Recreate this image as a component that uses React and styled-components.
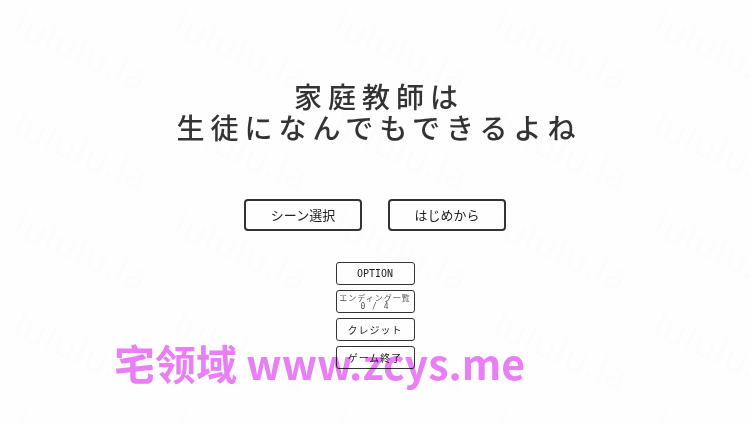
import React from "react";
import styled, { createGlobalStyle } from "styled-components";

const STAMPS = Array.from({ length: 25 }, (_, i) => i);

const MENU = [
  { id: "option", label: "OPTION", mono: true },
  { id: "endings", label: "エンディング一覧", count: "0 / 4" },
  { id: "credits", label: "クレジット" },
  { id: "quit", label: "ゲーム終了" },
];

const App = () => {
  return (
    <>
      <GlobalStyle />
      <Screen>
        <Title>
          家庭教師は
          <br />
          生徒になんでもできるよね
        </Title>
        <StartRow>
          <StartButton type="button">シーン選択</StartButton>
          <StartButton type="button">はじめから</StartButton>
        </StartRow>
        <Menu>
          {MENU.map((item) => (
            <MenuButton key={item.id} type="button" $mono={item.mono} $small={!!item.count}>
              {item.label}
              {item.count && <Count>{item.count}</Count>}
            </MenuButton>
          ))}
        </Menu>
        <SiteName lang="zh-CN">宅领域 www.zcys.me</SiteName>
        <Stamps aria-hidden="true">
          {STAMPS.map((n) => (
            <Stamp key={n}>lululu.la</Stamp>
          ))}
        </Stamps>
      </Screen>
    </>
  );
};

const GlobalStyle = createGlobalStyle`
  * {
    box-sizing: border-box;
  }
  body {
    margin: 0;
    background: #fefefe;
    font-family: "Noto Sans CJK JP", sans-serif;
  }
`;

const Screen = styled.main`
  position: relative;
  display: flex;
  flex-direction: column;
  align-items: center;
  min-height: 100vh;
  padding: 81px 16px 16px;
  overflow: hidden;
`;

const Title = styled.h1`
  margin: 0;
  padding-left: 8px;
  color: #333;
  font-size: 28px;
  font-weight: 500;
  line-height: 31px;
  letter-spacing: 6px;
  text-align: center;
`;

const StartRow = styled.div`
  display: flex;
  gap: 26px;
  margin-top: 56px;
`;

const StartButton = styled.button`
  width: 118px;
  height: 32px;
  padding: 0;
  border: 2px solid #333;
  border-radius: 4px;
  background: transparent;
  color: #222;
  font-family: inherit;
  font-size: 13px;
  line-height: 16px;
`;

const Menu = styled.nav`
  display: flex;
  flex-direction: column;
  gap: 5px;
  margin-top: 31px;
`;

const MenuButton = styled.button`
  width: 79px;
  height: 23px;
  padding: 0;
  border: 1px solid #333;
  border-radius: 3px;
  background: transparent;
  color: ${({ $small }) => ($small ? "#555" : "#222")};
  font-family: ${({ $mono }) => ($mono ? '"DejaVu Sans Mono", monospace' : "inherit")};
  font-size: ${({ $small }) => ($small ? "8px" : "10px")};
  line-height: 9px;
  letter-spacing: ${({ $mono }) => ($mono ? "0" : "1px")};
  white-space: nowrap;
`;

const Count = styled.span`
  display: block;
  font-family: "DejaVu Sans Mono", monospace;
`;

const SiteName = styled.div`
  position: absolute;
  top: 333px;
  left: 114px;
  color: #ea80f5;
  font-family: "Noto Sans CJK SC", sans-serif;
  font-size: 41px;
  font-weight: 700;
  line-height: 58px;
  white-space: nowrap;
  mix-blend-mode: multiply;
  pointer-events: none;
`;

const Stamps = styled.div`
  position: absolute;
  inset: 0;
  display: grid;
  grid-template-columns: repeat(5, 160px);
  grid-auto-rows: 100px;
  padding-left: 10px;
  overflow: hidden;
  pointer-events: none;
`;

const Stamp = styled.span`
  color: rgba(128, 128, 128, 0.02);
  font-family: "Noto Sans", sans-serif;
  font-size: 36px;
  line-height: 42px;
  letter-spacing: 1px;
  white-space: nowrap;
  transform: rotate(24deg);
  transform-origin: 0 36px;
`;

export default App;
